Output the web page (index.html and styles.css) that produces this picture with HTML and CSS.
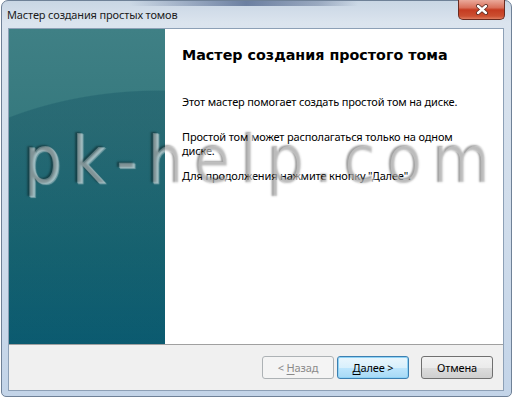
FILE: index.html
```html
<!DOCTYPE html>
<html lang="ru">
<head>
<meta charset="UTF-8">
<title>Мастер создания простых томов</title>
<link rel="stylesheet" href="styles.css">
</head>
<body>
<div class="window">
  <div class="titlebar">
    <span class="title">Мастер создания простых томов</span>
    <span class="close">
      <svg width="14" height="11" viewBox="0 0 14 11">
        <path d="M3 2 L11 9 M11 2 L3 9" stroke="#5a2a22" stroke-width="4" stroke-linecap="round"/>
        <path d="M3 2 L11 9 M11 2 L3 9" stroke="#fff" stroke-width="2.4" stroke-linecap="round"/>
      </svg>
    </span>
  </div>
  <div class="client">
    <div class="main">
      <div class="side"></div>
      <div class="content">
        <h1>Мастер создания простого тома</h1>
        <p class="intro">Этот мастер помогает создать простой том на диске.</p>
        <p class="note">Простой том может располагаться только на одном диске.</p>
        <p class="next">Для продолжения нажмите кнопку "Далее".</p>
      </div>
    </div>
    <div class="buttons">
      <button class="btn back" disabled>&lt; <u>Н</u>азад</button>
      <button class="btn default"><u>Д</u>алее &gt;</button>
      <button class="btn cancel">Отмена</button>
    </div>
  </div>
</div>
<div class="watermark">pk-help.com</div>
</body>
</html>
```

FILE: styles.css
```css
body { margin:0; background:#fff; font-family:"Noto Sans","Open Sans",sans-serif; font-size:11px; letter-spacing:-0.15px; color:#000; position:relative; width:516px; height:399px; overflow:hidden; }

/* рамка окна */
.window { margin-left:1px; width:511px; height:397px; box-sizing:border-box; border:1px solid #6f8197; border-radius:7px 7px 5px 5px; padding:0 7px 5px 6px; display:flex; flex-direction:column;
  background:linear-gradient(90deg, rgba(255,255,255,0) 25%, rgba(30,55,105,.55) 48%, rgba(60,80,120,.35) 62%, rgba(255,255,255,0) 70%) top/100% 5px no-repeat,
             linear-gradient(#c9d6e4, #dbe4ee 22px, #cfdceb 60%, #c3d4e8); }
.titlebar { height:27px; display:flex; justify-content:space-between; align-items:flex-start; }
.title { margin-top:6px; margin-left:-1px; color:#1b1b1b; }
.close { margin-top:-1px; margin-right:-1px; width:47px; height:20px; box-sizing:border-box; border:1px solid #6a2b20; border-top:none; border-radius:0 0 5px 5px; display:flex; align-items:center; justify-content:center;
  background:linear-gradient(#eaa99b, #d9705b 40%, #c53b21 52%, #cc4f31 85%, #df7c5f); }

.client { flex:1; display:flex; flex-direction:column; border:1px solid #8da0b6; background:#f0f0f0; }
.main { height:315px; display:flex; background:#fff; border-bottom:1px solid #a0a0a0; }
.side { width:156px;
  background:radial-gradient(300px 200px at 150px 261px, rgba(8,70,90,.3) 99.4%, rgba(8,70,90,0) 100%),
             linear-gradient(#3f8085, #36797e 30%, #1c6d78 70%, #0c6379); }
.content { flex:1; padding:17px 0 0 17px; }
h1 { margin:0; font-family:"DejaVu Sans",Verdana,sans-serif; font-weight:bold; font-size:14.3px; letter-spacing:0; line-height:18px; color:#000; }
p { margin:0; width:290px; line-height:14px; }
.intro { margin-top:31px; }
.note { margin-top:21px; }
.next { margin-top:11px; }

/* кнопки */
.buttons { flex:1; display:flex; justify-content:flex-end; align-items:center; padding-right:10px; }
.btn { width:72px; height:23px; box-sizing:border-box; font-family:inherit; font-size:11px; letter-spacing:-0.15px; padding:0; border-radius:3px; border:1px solid #707070; color:#000;
  background:linear-gradient(#f2f2f2, #ebebeb 50%, #dddddd 51%, #cfcfcf); }
.btn u { text-decoration-thickness:1px; text-underline-offset:2px; }
.back { margin-right:3px; color:#8a8a8a; border-color:#adb2b5; background:#f4f4f4; }
.default { margin-right:12px; border-color:#3c7fb1; box-shadow:inset 0 0 0 1px #8fd3f6;
  background:linear-gradient(#eaf6fd, #d9f0fc 50%, #bee6fd 51%, #a7d9f5); }

/* водяной знак */
.watermark { position:absolute; left:24px; top:128px; font-family:"DejaVu Sans",sans-serif; font-stretch:condensed; font-size:66px; line-height:66px; letter-spacing:10px; white-space:nowrap; pointer-events:none;
  color:rgba(255,255,255,.3); text-shadow:-2px -1px 2px rgba(0,0,0,.38), 1px 1px 1px rgba(255,255,255,.4); }
```
